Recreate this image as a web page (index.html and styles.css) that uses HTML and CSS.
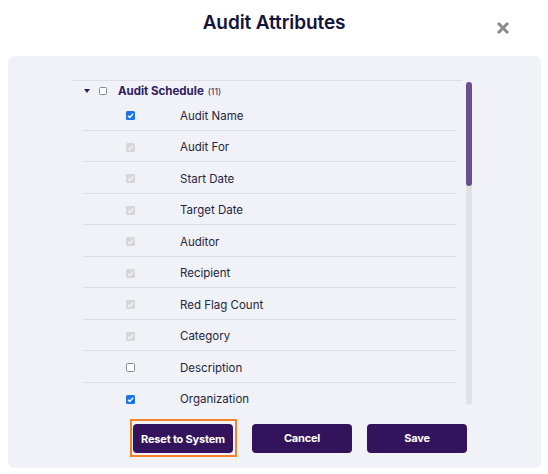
FILE: index.html
```html
<!DOCTYPE html>
<html>
<head>
<meta charset="utf-8">
<link rel="stylesheet" href="styles.css">
</head>
<body>
<div class="dialog">
  <div class="header">
    <h1 class="title">Audit Attributes</h1>
    <span class="close" aria-label="Close">
      <svg width="12" height="12" viewBox="0 0 12 12"><path d="M2 2 L10 10 M10 2 L2 10" stroke="#8a8a8a" stroke-width="3" stroke-linecap="square"/></svg>
    </span>
  </div>
  <div class="panel">
    <div class="scroller">
      <div class="tree">
        <div class="group-row">
          <span class="caret"></span>
          <span class="cb cb-empty small"></span>
          <span class="group-name">Audit Schedule</span>
          <span class="count">(11)</span>
        </div>
        <div class="row"><span class="cell-cb"><span class="cb cb-on"><svg viewBox="0 0 10 10"><path d="M2.2 5.2 L4.2 7.2 L7.9 3" /></svg></span></span><span class="label">Audit Name</span></div>
        <div class="row"><span class="cell-cb"><span class="cb cb-dis"><svg viewBox="0 0 10 10"><path d="M2.2 5.2 L4.2 7.2 L7.9 3" /></svg></span></span><span class="label">Audit For</span></div>
        <div class="row"><span class="cell-cb"><span class="cb cb-dis"><svg viewBox="0 0 10 10"><path d="M2.2 5.2 L4.2 7.2 L7.9 3" /></svg></span></span><span class="label">Start Date</span></div>
        <div class="row"><span class="cell-cb"><span class="cb cb-dis"><svg viewBox="0 0 10 10"><path d="M2.2 5.2 L4.2 7.2 L7.9 3" /></svg></span></span><span class="label">Target Date</span></div>
        <div class="row"><span class="cell-cb"><span class="cb cb-dis"><svg viewBox="0 0 10 10"><path d="M2.2 5.2 L4.2 7.2 L7.9 3" /></svg></span></span><span class="label">Auditor</span></div>
        <div class="row"><span class="cell-cb"><span class="cb cb-dis"><svg viewBox="0 0 10 10"><path d="M2.2 5.2 L4.2 7.2 L7.9 3" /></svg></span></span><span class="label">Recipient</span></div>
        <div class="row"><span class="cell-cb"><span class="cb cb-dis"><svg viewBox="0 0 10 10"><path d="M2.2 5.2 L4.2 7.2 L7.9 3" /></svg></span></span><span class="label">Red Flag Count</span></div>
        <div class="row"><span class="cell-cb"><span class="cb cb-dis"><svg viewBox="0 0 10 10"><path d="M2.2 5.2 L4.2 7.2 L7.9 3" /></svg></span></span><span class="label">Category</span></div>
        <div class="row"><span class="cell-cb"><span class="cb cb-empty"></span></span><span class="label">Description</span></div>
        <div class="row"><span class="cell-cb"><span class="cb cb-on"><svg viewBox="0 0 10 10"><path d="M2.2 5.2 L4.2 7.2 L7.9 3" /></svg></span></span><span class="label">Organization</span></div>
        <div class="row"><span class="cell-cb"><span class="cb cb-empty"></span></span><span class="label">Status</span></div>
      </div>
      <div class="scrollbar"><div class="thumb"></div></div>
    </div>
    <div class="actions">
      <span class="focus-ring"><button class="btn">Reset to System</button></span>
      <button class="btn">Cancel</button>
      <button class="btn">Save</button>
    </div>
  </div>
</div>
</body>
</html>
```
FILE: styles.css
```css
* { box-sizing: border-box; }
html, body {
  margin: 0;
  padding: 0;
  background: #ffffff;
  font-family: Inter, "Noto Sans", "Liberation Sans", sans-serif;
}
.dialog {
  width: 548px;
  height: 474px;
  display: flex;
  flex-direction: column;
}
.header {
  position: relative;
  height: 56px;
  display: flex;
  justify-content: center;
}
.title {
  margin: 0;
  padding-top: 11px;
  font-size: 19px;
  font-weight: 600;
  line-height: 24px;
  color: #14143a;
  letter-spacing: -0.1px;
}
.close {
  position: absolute;
  left: 497px;
  top: 22px;
  width: 12px;
  height: 12px;
  display: flex;
}
.panel {
  margin: 0 7px 0 8px;
  height: 412px;
  background: #f1f2f7;
  border-radius: 6px;
  display: flex;
  flex-direction: column;
}
.scroller {
  margin: 24px 0 0 65px;
  width: 399px;
  height: 326px;
  display: flex;
  overflow: hidden;
}
.tree {
  width: 389px;
  flex: none;
  border-top: 1px solid #dedee3;
}
.group-row {
  height: 18px;
  display: flex;
  align-items: center;
  padding-left: 11px;
  padding-top: 2px;
}
.caret {
  width: 0;
  height: 0;
  border-left: 3.5px solid transparent;
  border-right: 3.5px solid transparent;
  border-top: 4px solid #2e1a5e;
  margin-right: 9px;
}
.group-name {
  margin-left: 11px;
  font-size: 11.5px;
  font-weight: 700;
  color: #2f1a60;
}
.count {
  margin-left: 4px;
  font-size: 8.5px;
  font-weight: 500;
  color: #4a3a6e;
  padding-top: 1px;
}
.row {
  height: 31.5px;
  margin-left: 10px;
  margin-right: 6px;
  display: flex;
  align-items: center;
  padding-top: 3px;
  border-bottom: 1px solid #dcdce1;
}
.row:last-child { border-bottom: none; }
.cell-cb {
  width: 97px;
  padding-left: 43px;
  display: flex;
}
.label {
  font-size: 11.5px;
  color: #25253f;
}
.cb {
  width: 9px;
  height: 9px;
  border-radius: 1.5px;
  display: inline-flex;
}
.cb svg {
  width: 9px;
  height: 9px;
  fill: none;
  stroke: #ffffff;
  stroke-width: 1.6;
}
.cb-on { background: #1a73e8; }
.cb-dis { background: #d6d6d9; }
.cb-dis svg { stroke: #f4f4f6; }
.cb-empty {
  background: #ffffff;
  border: 1px solid #8a8a8f;
}
.cb.small { width: 8px; height: 8px; }
.scrollbar {
  margin-left: 4px;
  margin-top: 2px;
  width: 6px;
  height: 323px;
  background: #e1e1e6;
  border-radius: 3px;
}
.thumb {
  height: 104px;
  background: #6a4f8e;
  border-radius: 3px;
}
.actions {
  margin-top: 13px;
  padding-left: 122px;
  display: flex;
  align-items: center;
  gap: 15px;
}
.focus-ring {
  display: flex;
  padding: 3px 2px 2px 1px;
  border: 2px solid #f5822a;
}
.btn {
  width: 100px;
  height: 29px;
  border: none;
  border-radius: 4px;
  background: #33135c;
  color: #ffffff;
  font-family: Inter, "Noto Sans", "Liberation Sans", sans-serif;
  font-size: 11px;
  font-weight: 700;
  letter-spacing: -0.2px;
  white-space: nowrap;
  padding: 0;
}
```
